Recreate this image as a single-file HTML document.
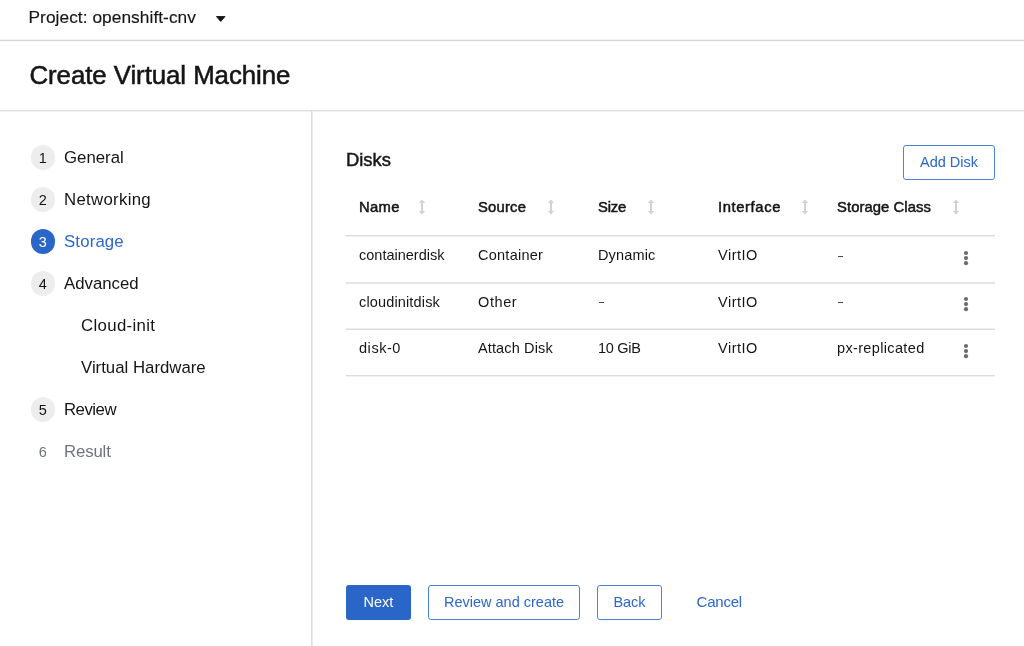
<!DOCTYPE html>
<html><head><meta charset="utf-8">
<style>
*{margin:0;padding:0;box-sizing:border-box}
html,body{width:1024px;height:646px;overflow:hidden;background:#fff;will-change:transform;font-family:"Liberation Sans",sans-serif;color:#151515}
.abs{position:absolute;white-space:nowrap}
.hl{position:absolute;height:1px;background:#d9d9d9}
.vl{position:absolute;width:1px;background:#d9d9d9}
.proj{left:28.5px;top:7px;font-size:17.3px;line-height:20px;letter-spacing:0.06px;-webkit-text-stroke:0.15px #151515}
.caret{left:216px;top:16px;width:0;height:0;border-left:5px solid transparent;border-right:5px solid transparent;border-top:5.5px solid #151515}
.title{left:29.5px;top:60.4px;font-size:25.8px;letter-spacing:-0.05px;line-height:30px;-webkit-text-stroke:0.55px #151515}
.nav{font-size:16.8px;line-height:20px}
.circ{position:absolute;width:24.6px;height:24.6px;border-radius:50%;background:#ededed;color:#151515;font-size:14.5px;line-height:26.6px;text-align:center}
.circ.act{background:#2a65c8;color:#fff}
.blue{color:#2b67cc}
.gray{color:#70747a}
.disks{left:346px;top:149px;font-size:18.4px;line-height:22px;-webkit-text-stroke:0.45px #151515}
.th{font-weight:normal;font-size:14.8px;line-height:18px;-webkit-text-stroke:0.5px #151515}
.td{font-size:14.5px;line-height:18px}
.dash{position:absolute;width:5.2px;height:1px;background:#4a4a4a;box-shadow:0 0 0.6px #999}
.btn{position:absolute;border-radius:3px;font-size:14.5px;text-align:center;line-height:34px;height:35px}
.bp{background:#2a65c8;color:#fff}
.bs{border:1px solid #4a84d4;color:#2b67cc;line-height:32px}
</style></head><body>

<div class="abs proj">Project: openshift-cnv</div>
<svg class="abs" style="left:210px;top:10px" width="22" height="16" viewBox="0 0 22 16"><path d="M6.4 6.5 L15 6.5 L10.7 11.4 Z" fill="#151515" stroke="#151515" stroke-width="0.9" stroke-linejoin="round"/></svg>
<div class="hl" style="left:0;top:39px;width:1024px;height:3px;background:linear-gradient(#f3f3f3 33.3%,#d6d6d6 33.3%,#d6d6d6 66.6%,#f9f9f9 66.6%)"></div>
<div class="abs title">Create Virtual Machine</div>
<div class="hl" style="left:0;top:110px;width:1024px;height:2px;background:linear-gradient(#e0e0e0 50%,#f0f0f0 50%)"></div>
<div class="vl" style="left:311px;top:111px;height:535px;width:2px;background:linear-gradient(90deg,#dcdcdc 50%,#ececec 50%)"></div>
<div class="circ" style="left:30.6px;top:145px;">1</div>
<div class="abs nav " style="left:64px;top:148px;letter-spacing:0px">General</div>
<div class="circ" style="left:30.6px;top:187px;">2</div>
<div class="abs nav " style="left:64px;top:190px;letter-spacing:0.3px">Networking</div>
<div class="circ act" style="left:30.6px;top:229px;">3</div>
<div class="abs nav blue" style="left:64px;top:232px;letter-spacing:0.15px">Storage</div>
<div class="circ" style="left:30.6px;top:271px;">4</div>
<div class="abs nav " style="left:64px;top:274px;letter-spacing:0px">Advanced</div>
<div class="abs nav " style="left:81px;top:316px;letter-spacing:0.35px">Cloud-init</div>
<div class="abs nav " style="left:81px;top:358px;letter-spacing:0px">Virtual Hardware</div>
<div class="circ" style="left:30.6px;top:397px;">5</div>
<div class="abs nav " style="left:64px;top:400px;letter-spacing:-0.5px">Review</div>
<div class="circ gray" style="left:30.6px;top:439px;background:none;">6</div>
<div class="abs nav gray" style="left:64px;top:442px;letter-spacing:-0.15px">Result</div>
<div class="abs disks">Disks</div>
<div class="btn bs" style="left:903px;top:145px;width:92px">Add Disk</div>
<div class="abs th" style="left:359px;top:198px;letter-spacing:0.3px">Name</div>
<div class="abs th" style="left:478px;top:198px;letter-spacing:0.2px">Source</div>
<div class="abs th" style="left:598px;top:198px;letter-spacing:-0.2px">Size</div>
<div class="abs th" style="left:718px;top:198px;letter-spacing:0.6px">Interface</div>
<div class="abs th" style="left:837px;top:198px;letter-spacing:0.08px">Storage Class</div>
<svg class="abs" style="left:418.3px;top:199px" width="8" height="16" viewBox="0 0 8 16"><path d="M4 0.5 L7.2 4 L5 4 L5 12 L7.2 12 L4 15.5 L0.8 12 L3 12 L3 4 L0.8 4 Z" fill="#d2d2d2"/></svg>
<svg class="abs" style="left:546.5px;top:199px" width="8" height="16" viewBox="0 0 8 16"><path d="M4 0.5 L7.2 4 L5 4 L5 12 L7.2 12 L4 15.5 L0.8 12 L3 12 L3 4 L0.8 4 Z" fill="#d2d2d2"/></svg>
<svg class="abs" style="left:646.5px;top:199px" width="8" height="16" viewBox="0 0 8 16"><path d="M4 0.5 L7.2 4 L5 4 L5 12 L7.2 12 L4 15.5 L0.8 12 L3 12 L3 4 L0.8 4 Z" fill="#d2d2d2"/></svg>
<svg class="abs" style="left:800.5px;top:199px" width="8" height="16" viewBox="0 0 8 16"><path d="M4 0.5 L7.2 4 L5 4 L5 12 L7.2 12 L4 15.5 L0.8 12 L3 12 L3 4 L0.8 4 Z" fill="#d2d2d2"/></svg>
<svg class="abs" style="left:952px;top:199px" width="8" height="16" viewBox="0 0 8 16"><path d="M4 0.5 L7.2 4 L5 4 L5 12 L7.2 12 L4 15.5 L0.8 12 L3 12 L3 4 L0.8 4 Z" fill="#d2d2d2"/></svg>
<div class="hl" style="left:346px;top:235px;width:649px;height:2px;background:linear-gradient(#dcdcdc 50%,#eeeeee 50%)"></div>
<div class="hl" style="left:346px;top:282px;width:649px;height:2px;background:linear-gradient(#e4e4e4 50%,#e4e4e4 50%)"></div>
<div class="hl" style="left:346px;top:328px;width:649px;height:2px;background:linear-gradient(#eeeeee 50%,#dcdcdc 50%)"></div>
<div class="hl" style="left:346px;top:375px;width:649px;height:2px;background:linear-gradient(#dadada 50%,#f2f2f2 50%)"></div>
<div class="abs td" style="left:359px;top:246px;letter-spacing:0px">containerdisk</div>
<div class="abs td" style="left:478px;top:246px;letter-spacing:0.25px">Container</div>
<div class="abs td" style="left:598px;top:246px;letter-spacing:0.15px">Dynamic</div>
<div class="abs td" style="left:718px;top:246px;letter-spacing:0.5px">VirtIO</div>
<div class="dash" style="left:837.8px;top:256px"></div>
<svg class="abs" style="left:963px;top:250.2px" width="6" height="16" viewBox="0 0 6 16"><circle cx="3" cy="3" r="2.1" fill="#6a6e73"/><circle cx="3" cy="8.1" r="2.1" fill="#6a6e73"/><circle cx="3" cy="13.2" r="2.1" fill="#6a6e73"/></svg>
<div class="abs td" style="left:359px;top:293px;letter-spacing:0.15px">cloudinitdisk</div>
<div class="abs td" style="left:478px;top:293px;letter-spacing:0.6px">Other</div>
<div class="dash" style="left:598.8px;top:302px"></div>
<div class="abs td" style="left:718px;top:293px;letter-spacing:0.5px">VirtIO</div>
<div class="dash" style="left:837.8px;top:302px"></div>
<svg class="abs" style="left:963px;top:296.4px" width="6" height="16" viewBox="0 0 6 16"><circle cx="3" cy="3" r="2.1" fill="#6a6e73"/><circle cx="3" cy="8.1" r="2.1" fill="#6a6e73"/><circle cx="3" cy="13.2" r="2.1" fill="#6a6e73"/></svg>
<div class="abs td" style="left:359px;top:339px;letter-spacing:0.55px">disk-0</div>
<div class="abs td" style="left:478px;top:339px;letter-spacing:0.13px">Attach Disk</div>
<div class="abs td" style="left:598px;top:339px;letter-spacing:-0.3px">10 GiB</div>
<div class="abs td" style="left:718px;top:339px;letter-spacing:0.5px">VirtIO</div>
<div class="abs td" style="left:837px;top:339px;letter-spacing:0.35px">px-replicated</div>
<svg class="abs" style="left:963px;top:342.6px" width="6" height="16" viewBox="0 0 6 16"><circle cx="3" cy="3" r="2.1" fill="#6a6e73"/><circle cx="3" cy="8.1" r="2.1" fill="#6a6e73"/><circle cx="3" cy="13.2" r="2.1" fill="#6a6e73"/></svg>
<div class="btn bp" style="left:346px;top:585px;width:65px">Next</div>
<div class="btn bs" style="left:428px;top:585px;width:152px">Review and create</div>
<div class="btn bs" style="left:597px;top:585px;width:65px">Back</div>
<div class="abs blue" style="left:696.5px;top:593px;font-size:15px;line-height:18px;letter-spacing:-0.2px">Cancel</div>
</body></html>
